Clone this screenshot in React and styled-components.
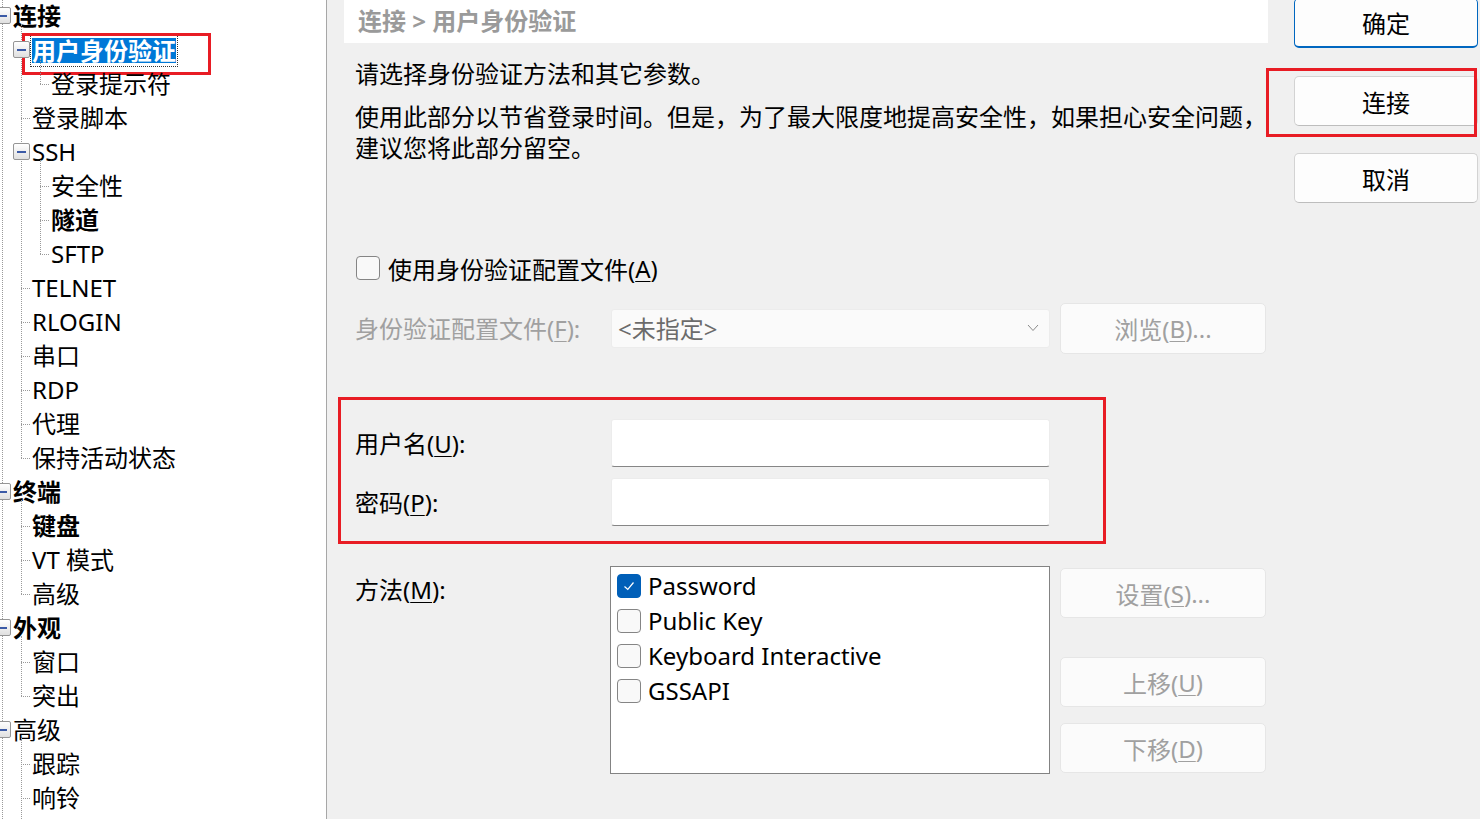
import React from "react";
import styled, { createGlobalStyle, css } from "styled-components";

const GlobalStyle = createGlobalStyle`
  * { box-sizing: border-box; }
  body {
    margin: 0;
    background: #f0f0f0;
    font-family: "Noto Sans", "Noto Sans CJK SC", sans-serif;
    color: #000;
    overflow: hidden;
  }
`;

// tree geometry: each level is indented 19px
const lineX = (level) => 2 + 19 * level;
const textX = (level) => 13 + 19 * level;

const treeData = [
  {
    label: "连接",
    bold: true,
    children: [
      { label: "用户身份验证", bold: true, selected: true, children: [{ label: "登录提示符" }] },
      { label: "登录脚本" },
      {
        label: "SSH",
        children: [{ label: "安全性" }, { label: "隧道", bold: true }, { label: "SFTP" }],
      },
      { label: "TELNET" },
      { label: "RLOGIN" },
      { label: "串口" },
      { label: "RDP" },
      { label: "代理" },
      { label: "保持活动状态" },
    ],
  },
  {
    label: "终端",
    bold: true,
    children: [{ label: "键盘", bold: true }, { label: "VT 模式" }, { label: "高级" }],
  },
  { label: "外观", bold: true, children: [{ label: "窗口" }, { label: "突出" }] },
  // this branch continues below the visible area
  { label: "高级", open: true, children: [{ label: "跟踪" }, { label: "响铃" }] },
];

const TreeNode = ({ node, level }) => (
  <>
    <Row $level={level}>
      {node.children && <Expander $level={level} />}
      {node.selected ? (
        <SelectedLabel>{node.label}</SelectedLabel>
      ) : (
        <Label $bold={node.bold}>{node.label}</Label>
      )}
      {node.selected && <Mark />}
    </Row>
    {node.children && (
      <Branch $level={level + 1} $open={node.open}>
        {node.children.map((child) => (
          <TreeNode key={child.label} node={child} level={level + 1} />
        ))}
      </Branch>
    )}
  </>
);

const CheckIcon = () => (
  <svg width="14" height="14" viewBox="0 0 14 14">
    <polyline points="2.5,7.5 5.8,10.5 11.5,3.5" fill="none" stroke="#fff" strokeWidth="1.2" />
  </svg>
);

const methods = [
  { name: "Password", checked: true },
  { name: "Public Key" },
  { name: "Keyboard Interactive" },
  { name: "GSSAPI" },
];

const App = () => {
  return (
    <>
      <GlobalStyle />
      <Window>
        <Tree>
          <TreeList>
            {treeData.map((node) => (
              <TreeNode key={node.label} node={node} level={0} />
            ))}
          </TreeList>
        </Tree>

        <Main>
          <Breadcrumb>连接 &gt; 用户身份验证</Breadcrumb>
          <Intro>
            <p>请选择身份验证方法和其它参数。</p>
            <p>
              使用此部分以节省登录时间。但是，为了最大限度地提高安全性，如果担心安全问题，
              <br />
              建议您将此部分留空。
            </p>
          </Intro>

          <CheckRow>
            <Box />
            使用身份验证配置文件(<Key>A</Key>)
          </CheckRow>

          <FormRow $top={19}>
            <FieldLabel $disabled>
              身份验证配置文件(<Key>F</Key>):
            </FieldLabel>
            <Select>
              &lt;未指定&gt;
              <svg width="12" height="8" viewBox="0 0 12 8">
                <polyline points="1,1 6,6.5 11,1" fill="none" stroke="#8a8a8a" strokeWidth="1" />
              </svg>
            </Select>
            <SideButton $height={51}>
              浏览(<Key>B</Key>)...
            </SideButton>
          </FormRow>

          <Highlight>
            <FormRow>
              <FieldLabel>
                用户名(<Key>U</Key>):
              </FieldLabel>
              <TextInput />
            </FormRow>
            <FormRow $top={11}>
              <FieldLabel>
                密码(<Key>P</Key>):
              </FieldLabel>
              <TextInput type="password" />
            </FormRow>
          </Highlight>

          <MethodRow>
            <FieldLabel $pad={8}>
              方法(<Key>M</Key>):
            </FieldLabel>
            <ListBox>
              {methods.map((m) => (
                <ListItem key={m.name}>
                  <Box $checked={m.checked}>{m.checked && <CheckIcon />}</Box>
                  {m.name}
                </ListItem>
              ))}
            </ListBox>
            <SideStack>
              <SideButton>
                设置(<Key>S</Key>)...
              </SideButton>
              <SideButton $top={39}>
                上移(<Key>U</Key>)
              </SideButton>
              <SideButton $top={16}>
                下移(<Key>D</Key>)
              </SideButton>
            </SideStack>
          </MethodRow>
        </Main>

        <ButtonColumn>
          <DlgButton $primary>确定</DlgButton>
          <Marked>
            <DlgButton>连接</DlgButton>
          </Marked>
          <DlgButton>取消</DlgButton>
        </ButtonColumn>
      </Window>
    </>
  );
};

const Window = styled.div`
  display: flex;
  height: 819px;
  overflow: hidden;
`;

/* ---------- tree ---------- */

const Tree = styled.div`
  position: relative;
  flex: none;
  width: 327px;
  height: 819px;
  background: #fff;
  border-right: 1px solid #a7a7a7;
  overflow: hidden;

  &::before {
    content: "";
    position: absolute;
    left: ${lineX(0)}px;
    top: 0;
    bottom: 0;
    border-left: 1px dotted #9a9a9a;
  }
`;

const TreeList = styled.div`
  margin-top: -1px;
`;

const Branch = styled.div`
  position: relative;

  &::before {
    content: "";
    position: absolute;
    left: ${(p) => lineX(p.$level)}px;
    top: -9px;
    bottom: ${(p) => (p.$open ? -40 : 17)}px;
    border-left: 1px dotted #9a9a9a;
  }
`;

const Row = styled.div`
  position: relative;
  display: flex;
  align-items: center;
  height: 34px;
  padding-left: ${(p) => textX(p.$level)}px;
  font-size: 24px;
  white-space: nowrap;

  &::before {
    content: "";
    position: absolute;
    left: ${(p) => lineX(p.$level)}px;
    width: 9px;
    top: 17px;
    border-top: 1px dotted #9a9a9a;
  }
`;

const Expander = styled.span`
  position: absolute;
  z-index: 1;
  left: ${(p) => lineX(p.$level) - 8}px;
  top: 8px;
  width: 17px;
  height: 17px;
  border: 1px solid #959595;
  border-radius: 2px;
  background: linear-gradient(#ffffff, #e0e0e0);

  &::after {
    content: "";
    position: absolute;
    left: 3px;
    right: 3px;
    top: 6.5px;
    height: 2px;
    background: #3b5aa6;
  }
`;

const Label = styled.span`
  line-height: 34px;
  font-weight: ${(p) => (p.$bold ? 700 : 400)};
`;

const SelectedLabel = styled.span`
  margin-left: -2px;
  height: 34px;
  padding: 4px 1px 3px;
  border: 1px dotted #333;
  background: #0078d7;
  background-clip: content-box;
  color: #fff;
  font-weight: 700;
  line-height: 25px;
`;

const Mark = styled.span`
  position: absolute;
  left: 22px;
  top: 0;
  width: 189px;
  height: 42px;
  border: 3px solid #e81c24;
`;

/* ---------- main panel ---------- */

const Main = styled.div`
  flex: none;
  width: 941px;
  padding-left: 17px;
  display: flex;
  flex-direction: column;
  font-size: 24px;
`;

const Breadcrumb = styled.div`
  height: 43px;
  background: #fff;
  padding-left: 14px;
  line-height: 42px;
  font-weight: 700;
  color: #9a9a9a;
`;

const Intro = styled.div`
  padding-left: 11px;
  margin-top: 15px;
  white-space: nowrap;

  p {
    margin: 0;
    line-height: 31px;
  }
  p + p {
    margin-top: 12px;
  }
`;

const Key = styled.span`
  text-decoration: underline;
  text-underline-offset: 3px;
  text-decoration-thickness: 1px;
`;

const Box = styled.span`
  flex: none;
  display: inline-flex;
  align-items: center;
  justify-content: center;
  width: 24px;
  height: 24px;
  border-radius: 4px;
  border: 1px solid #858585;
  background: #f9f9f9;
  margin-right: 8px;

  ${(p) =>
    p.$checked &&
    css`
      border-color: #005fb8;
      background: #005fb8;
    `}
`;

const CheckRow = styled.label`
  display: flex;
  align-items: center;
  height: 32px;
  margin-top: 89px;
  padding-left: 12px;
`;

const FormRow = styled.div`
  display: grid;
  grid-template-columns: 246px 439px 206px;
  column-gap: 10px;
  align-items: center;
  margin-top: ${(p) => p.$top || 0}px;
  padding-left: 11px;
`;

const FieldLabel = styled.span`
  line-height: 31px;
  align-self: ${(p) => (p.$pad ? "start" : "center")};
  margin-top: ${(p) => p.$pad || 0}px;
  color: ${(p) => (p.$disabled ? "#a0a0a0" : "#000")};
  white-space: nowrap;
`;

const Select = styled.div`
  display: flex;
  align-items: center;
  justify-content: space-between;
  height: 39px;
  padding: 0 10px 2px 6px;
  background: #fafafa;
  border: 1px solid #ececec;
  border-radius: 3px;
  color: #6b6b6b;
`;

const SideButton = styled.div`
  display: flex;
  align-items: center;
  justify-content: center;
  height: ${(p) => p.$height || 50}px;
  margin-top: ${(p) => p.$top || 0}px;
  background: #fbfbfb;
  border: 1px solid #e6e6e6;
  border-radius: 5px;
  color: #a0a0a0;
`;

const Highlight = styled.div`
  margin: 43px 0 0 -6px;
  width: 768px;
  padding: 19px 0 15px 3px;
  border: 3px solid #e81c24;
`;

const TextInput = styled.input`
  height: 48px;
  background: #fff;
  border: 1px solid #ececec;
  border-bottom: 1px solid #868686;
  border-radius: 3px;
  font: inherit;
  outline: none;
`;

const MethodRow = styled(FormRow)`
  align-items: start;
  margin-top: 22px;
`;

const ListBox = styled.div`
  height: 208px;
  margin-left: -1px;
  padding: 1px 0 0 6px;
  background: #fff;
  border: 1px solid #838383;
`;

const ListItem = styled.div`
  display: flex;
  align-items: center;
  height: 35px;

  ${Box} {
    margin-right: 7px;
  }
`;

const SideStack = styled.div`
  display: flex;
  flex-direction: column;
  margin-top: 2px;
`;

/* ---------- dialog buttons ---------- */

const ButtonColumn = styled.div`
  flex: none;
  width: 184px;
  margin: -2px 0 0 26px;
  display: flex;
  flex-direction: column;
  gap: 27px;
`;

const DlgButton = styled.div`
  display: flex;
  align-items: center;
  justify-content: center;
  height: 50px;
  background: #fdfdfd;
  border: 1px solid #d3d3d3;
  border-bottom-color: #bdbdbd;
  border-radius: 5px;
  font-size: 24px;

  ${(p) =>
    p.$primary &&
    css`
      border-color: #0067c0;
      border-bottom-width: 2px;
      margin-bottom: 1px;
    `}
`;

const Marked = styled.div`
  position: relative;

  &::after {
    content: "";
    position: absolute;
    left: -28px;
    right: 1px;
    top: -8px;
    bottom: -11px;
    border: 3px solid #e81c24;
  }
`;

export default App;
